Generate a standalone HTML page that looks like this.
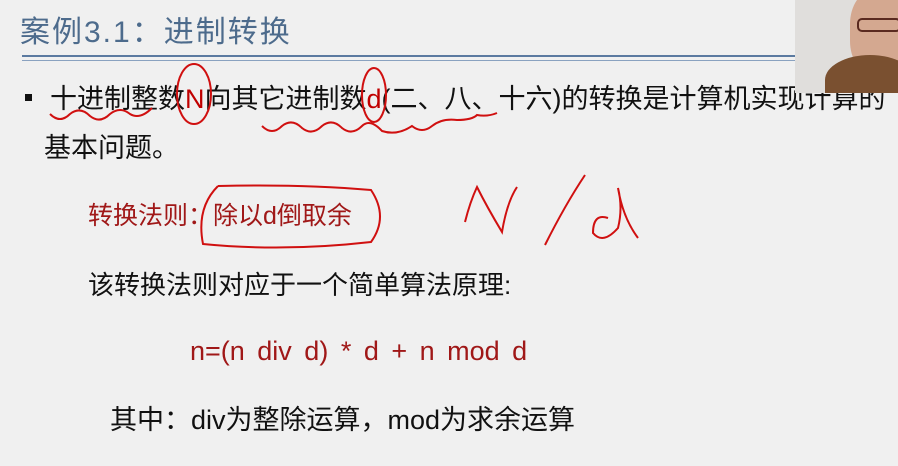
<!DOCTYPE html>
<html><head><meta charset="utf-8"><style>
body{margin:0;width:898px;height:466px;background:#f0f0f0;position:relative;overflow:hidden;font-family:"Liberation Sans","Noto Sans CJK SC",sans-serif}
.a{position:absolute;white-space:nowrap;line-height:1}
</style></head><body>
<div class="a" style="left:20px;top:18px;font-size:30px;letter-spacing:2px;color:#4d6b8c">案例3.1：进制转换</div>
<div style="position:absolute;left:22px;top:55px;width:780px;height:2px;background:#5b7aa0"></div>
<div style="position:absolute;left:22px;top:60px;width:780px;height:1px;background:#8aa2c0"></div>
<div class="a" style="left:25px;top:94px;width:7px;height:7px;background:#111"></div>
<div class="a" style="left:50px;top:86px;font-size:27px;color:#111">十进制整数<span style="color:#c00000">N</span>向其它进制数<span style="color:#c00000">d</span>(二、八、十六)的转换是计算机实现计算的</div>
<div class="a" style="left:44px;top:135px;font-size:27px;color:#111">基本问题。</div>
<div class="a" style="left:88px;top:204px;font-size:25px;color:#a01818">转换法则：除以d倒取余</div>
<div class="a" style="left:88px;top:272px;font-size:26px;color:#111">该转换法则对应于一个简单算法原理:</div>
<div class="a" style="left:190px;top:338px;font-size:27px;word-spacing:5px;color:#a01818">n=(n div d) * d + n mod d</div>
<div class="a" style="left:110px;top:407px;font-size:27px;color:#111">其中：div为整除运算，mod为求余运算</div>
<div style="position:absolute;left:795px;top:0;width:103px;height:93px;background:#e0dedc;overflow:hidden">
<div style="position:absolute;left:55px;top:-10px;width:60px;height:85px;background:#d4a890;border-radius:40%"></div>
<div style="position:absolute;left:30px;top:55px;width:90px;height:50px;background:#7a5030;border-radius:50% 50% 0 0"></div>
<div style="position:absolute;left:62px;top:18px;width:40px;height:10px;border:2px solid #5a2a20;border-radius:5px"></div>
</div>
<svg class="a" style="left:0;top:0" width="898" height="466" fill="none" stroke="#d01010" stroke-width="2">
<path d="M50 114 q10 10 20 0 q10 -8 20 2 q10 8 20 -2 q10 -8 20 0 q10 6 22 -6"/>
<ellipse cx="194" cy="94" rx="17" ry="30"/>
<ellipse cx="374" cy="95" rx="12" ry="27"/>
<path d="M262 126 q10 10 20 0 q10 -8 20 2 q10 8 20 -2 q10 -8 20 2 q10 8 20 -2 q8 -8 20 5 q15 5 30 -5 q10 8 20 0 q10 -8 25 -6 q15 0 20 -5 q10 2 20 -2"/>
<path d="M218 186 q-22 22 -15 58 q80 8 168 -2 q18 -25 0 -52 q-70 -6 -153 -4"/>
<path d="M465 222 q5 -20 12 -35 q10 20 25 45 q5 -30 15 -45"/>
<path d="M545 245 q20 -40 40 -70"/>
<path d="M608 218 q-15 -5 -15 15 q10 12 25 -5 q5 -20 0 -40 q5 30 20 50"/>
</svg>
</body></html>
